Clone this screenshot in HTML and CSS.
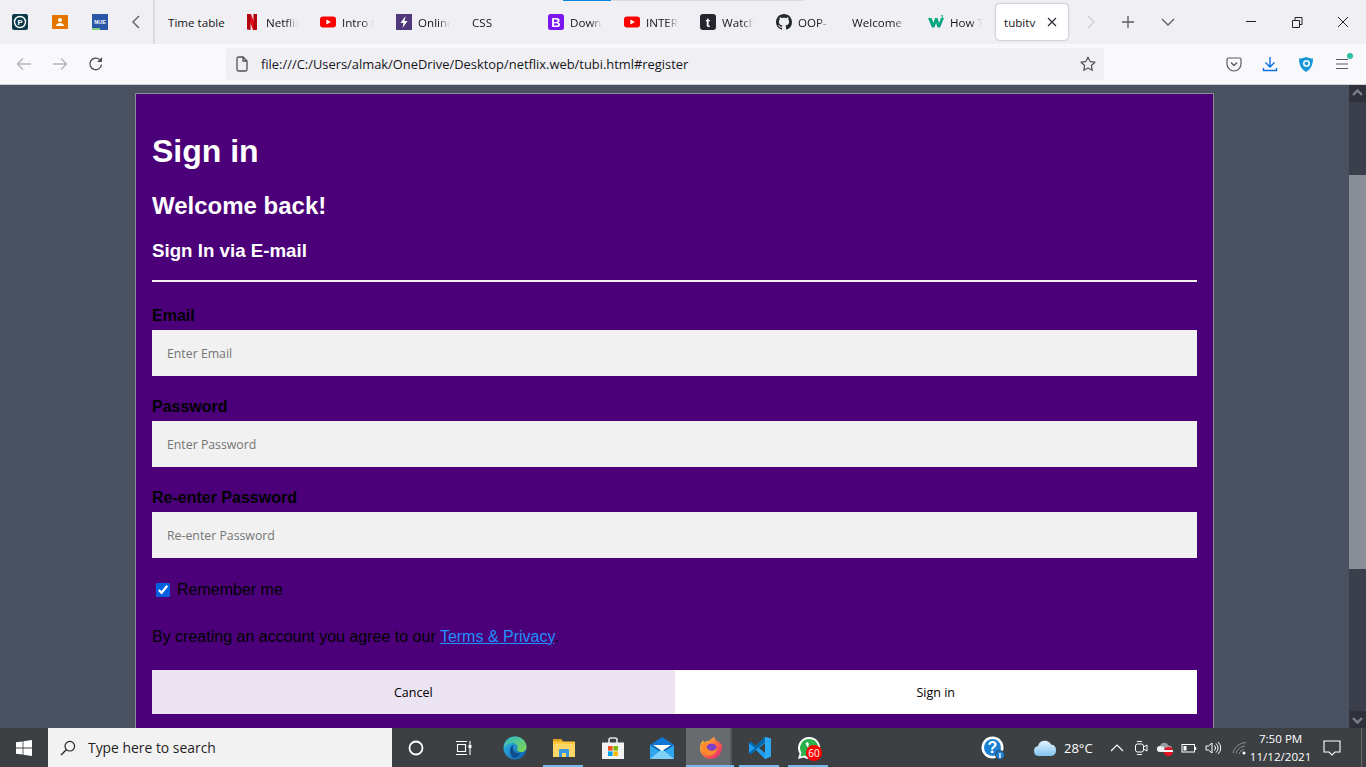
FILE: index.html
```html
<!DOCTYPE html>
<html lang="en">
<head>
  <meta charset="UTF-8">
  <title>tubitv</title>
  <link rel="stylesheet" href="styles.css">
</head>
<body>
  <!-- browser tab strip -->
  <div class="tabbar">
    <span class="tab-progress"></span>
    <svg class="ico pin" viewBox="0 0 16 16"><rect width="16" height="16" rx="2" fill="#0e3b49"/><circle cx="8" cy="8" r="5.5" fill="none" stroke="#fff" stroke-width="1.4"/><text x="8" y="10.6" class="svg-letter" font-size="7.5" fill="#fff">P</text></svg>
    <svg class="ico pin" viewBox="0 0 16 16"><rect width="16" height="14" y="1" rx="1" fill="#e37400"/><circle cx="8" cy="6" r="2" fill="#fff"/><path d="M4 12c0-4 8-4 8 0z" fill="#fff"/></svg>
    <svg class="ico pin" viewBox="0 0 16 16"><rect width="16" height="16" fill="#2a56a8"/><rect y="14" width="8" height="2" fill="#7fcf7a"/><text x="8" y="9.5" class="svg-letter" font-size="5.5" fill="#fff">NUE</text></svg>
    <svg class="ico pin" viewBox="0 0 16 16"><path d="M11 2 5 8l6 6" fill="none" stroke="#5b5b66" stroke-width="1.4"/></svg>
    <span class="tab-sep"></span>

    <div class="tab tab-plain"><span class="tab-label">Time table</span></div>
    <div class="tab"><svg class="ico tab-ico" viewBox="0 0 16 16"><path d="M3 0h4l6 16H9z" fill="#e50914"/><path d="M3 0h3.6v16L3 15.600zM9.400 0H13v15.600L9.400 16z" fill="#b1060f"/></svg><span class="tab-label">Netflix</span></div>
    <div class="tab"><svg class="ico tab-ico" viewBox="0 0 16 16"><rect y="2.500" width="16" height="11" rx="3" fill="#f00"/><path d="m6.400 5.500 4.400 2.500-4.400 2.500z" fill="#fff"/></svg><span class="tab-label">Intro t</span></div>
    <div class="tab"><svg class="ico tab-ico" viewBox="0 0 16 16"><rect width="16" height="16" fill="#51387c"/><path d="M9.500 2 4.500 9h3l-1 5 5-7h-3z" fill="#fff"/></svg><span class="tab-label">Online</span></div>
    <div class="tab"><span class="tab-label">CSS</span></div>
    <div class="tab"><svg class="ico tab-ico" viewBox="0 0 16 16"><rect width="16" height="16" rx="2.500" fill="#7c14f0"/><text x="8" y="12.500" class="svg-letter" font-size="13" fill="#fff">B</text></svg><span class="tab-label">Down</span></div>
    <div class="tab"><svg class="ico tab-ico" viewBox="0 0 16 16"><rect y="2.500" width="16" height="11" rx="3" fill="#f00"/><path d="m6.400 5.500 4.400 2.500-4.400 2.500z" fill="#fff"/></svg><span class="tab-label">INTER</span></div>
    <div class="tab"><svg class="ico tab-ico" viewBox="0 0 16 16"><rect width="16" height="16" rx="3" fill="#26262e"/><text x="8" y="13" class="svg-letter" font-size="13" fill="#fff">t</text></svg><span class="tab-label">Watch</span></div>
    <div class="tab"><svg class="ico tab-ico" viewBox="0 0 16 16"><path fill="#24292f" d="M8 0C3.580 0 0 3.580 0 8c0 3.540 2.290 6.530 5.470 7.590.4.070.55-.17.55-.38 0-.19-.01-.82-.01-1.490-2.010.37-2.530-.49-2.690-.94-.09-.23-.48-.94-.82-1.130-.28-.15-.68-.52-.01-.53.63-.01 1.080.58 1.230.82.72 1.210 1.870.87 2.330.66.070-.52.28-.87.51-1.070-1.780-.2-3.640-.89-3.640-3.950 0-.87.31-1.590.82-2.150-.08-.2-.36-1.020.08-2.120 0 0 .67-.21 2.200.82.64-.18 1.320-.27 2-.27.68 0 1.360.09 2 .27 1.530-1.040 2.200-.82 2.200-.82.44 1.100.16 1.920.08 2.120.51.56.82 1.270.82 2.150 0 3.070-1.870 3.750-3.650 3.950.29.25.54.73.54 1.480 0 1.070-.01 1.930-.01 2.200 0 .21.15.46.55.38A8.013 8.013 0 0 0 16 8c0-4.420-3.580-8-8-8z"/></svg><span class="tab-label">OOP-</span></div>
    <div class="tab"><span class="tab-label">Welcome</span></div>
    <div class="tab tab-last"><svg class="ico tab-ico" viewBox="0 0 16 16"><path d="M0 4h3.500l2 5 1.500-5h2.500l1.500 5 2-5H16l-4 9.500H9.500L8 9l-1.500 4.500H4z" fill="#00a67d"/><text x="14" y="4.500" class="svg-letter" font-size="5" fill="#00a67d">3</text></svg><span class="tab-label">How T</span></div>
    <div class="tab-active">
      <span>tubitv</span>
      <svg class="ico" viewBox="0 0 16 16"><path d="m4 4 8 8m0-8-8 8" fill="none" stroke="#2b2a33" stroke-width="1.200"/></svg>
    </div>

    <svg class="ico ctl-scroll" viewBox="0 0 16 16"><path d="m5 2 6 6-6 6" fill="none" stroke="#cfcfd8" stroke-width="1.400"/></svg>
    <svg class="ico ctl-new" viewBox="0 0 16 16"><path d="M8 2v12M2 8h12" fill="none" stroke="#5b5b66" stroke-width="1.300"/></svg>
    <svg class="ico ctl-list" viewBox="0 0 16 16"><path d="m2 5 6 6 6-6" fill="none" stroke="#5b5b66" stroke-width="1.300"/></svg>
    <svg class="ico ctl-min" viewBox="0 0 16 16"><path d="M3 7.500h10" fill="none" stroke="#222" stroke-width="1"/></svg>
    <svg class="ico ctl-win" viewBox="0 0 16 16"><path d="M3.500 6.500h7v7h-7zM6 6.500v-3h7v7h-2.500" fill="none" stroke="#222" stroke-width="1"/></svg>
    <svg class="ico ctl-win" viewBox="0 0 16 16"><path d="m3 3 10 10m0-10L3 13" fill="none" stroke="#222" stroke-width="1"/></svg>
  </div>

  <!-- browser toolbar -->
  <div class="toolbar">
    <div class="tool-btn"><svg class="ico" viewBox="0 0 16 16"><path d="M15 8H2m5-5.500L1.500 8 7 13.500" fill="none" stroke="#b4b4bb" stroke-width="1.300"/></svg></div>
    <div class="tool-btn"><svg class="ico" viewBox="0 0 16 16"><path d="M1 8h13M9 2.500 14.500 8 9 13.500" fill="none" stroke="#b4b4bb" stroke-width="1.300"/></svg></div>
    <div class="tool-btn"><svg class="ico" viewBox="0 0 16 16"><path d="M13.500 8.500A5.800 5.800 0 1 1 11.500 3.500" fill="none" stroke="#4f4f58" stroke-width="1.400"/><path d="M14 1v5H9z" fill="#4f4f58"/></svg></div>
    <div class="address">
      <svg class="ico addr-file" viewBox="0 0 16 16"><path d="M3 2.500A1.500 1.500 0 0 1 4.500 1H9l4 4v8.500A1.500 1.500 0 0 1 11.500 15h-7A1.500 1.500 0 0 1 3 13.500zM9 1v4h4" fill="none" stroke="#4f4f58" stroke-width="1.300"/></svg>
      <span class="addr-text">file:///C:/Users/almak/OneDrive/Desktop/netflix.web/tubi.html#register</span>
      <svg class="ico addr-star" viewBox="0 0 16 16"><path d="m8 1.200 2.100 4.400 4.800.6-3.500 3.300.9 4.800L8 12l-4.300 2.300.9-4.800L1.100 6.200l4.800-.6z" fill="none" stroke="#4f4f58" stroke-width="1.200" stroke-linejoin="round"/></svg>
    </div>
    <div class="tool-right">
      <div class="tool-btn"><svg class="ico" viewBox="0 0 16 16"><path d="M2.500 2h11A1.500 1.500 0 0 1 15 3.500V8a7 7 0 0 1-14 0V3.500A1.500 1.500 0 0 1 2.500 2z" fill="none" stroke="#5b5b66" stroke-width="1.200"/><path d="m5 6.500 3 3 3-3" fill="none" stroke="#5b5b66" stroke-width="1.400"/></svg></div>
      <div class="tool-btn"><svg class="ico" viewBox="0 0 16 16"><path d="M8 1v9.500M3.500 6.500 8 11l4.500-4.500M1.500 12v2.500h13V12" fill="none" stroke="#0a6fe0" stroke-width="1.400"/></svg></div>
      <div class="tool-btn"><svg class="ico" viewBox="0 0 16 16"><path d="M1 2.500c3 0 5-.7 7-1.500 2 .8 4 1.500 7 1.500C15 8.500 13 13 8 16 3 13 1 8.500 1 2.500z" fill="#1597d5"/><circle cx="8.500" cy="7.500" r="3.600" fill="#dff3fb"/><circle cx="8.500" cy="7.500" r="1.800" fill="#1597d5"/></svg></div>
      <div class="tool-btn tool-menu">
        <svg class="ico" viewBox="0 0 16 16"><path d="M2 3.500h12M2 8h12M2 12.500h12" fill="none" stroke="#5b5b66" stroke-width="1.200"/></svg>
        <span class="menu-dot"></span>
      </div>
    </div>
  </div>

  <!-- page area -->
  <div class="viewport">
    <div class="page">
      <form class="modal-box">
        <h1>Sign in</h1>
        <h2>Welcome back!</h2>
        <h3>Sign In via E-mail</h3>
        <hr>
        <label for="email">Email</label>
        <input type="text" id="email" placeholder="Enter Email">
        <label for="psw">Password</label>
        <input type="password" id="psw" placeholder="Enter Password">
        <label for="psw2">Re-enter Password</label>
        <input type="password" id="psw2" placeholder="Re-enter Password">
        <div class="remember">
          <input type="checkbox" id="remember" checked>
          <span>Remember me</span>
        </div>
        <p class="terms">By creating an account you agree to our <a href="#">Terms &amp; Privacy</a>.</p>
        <div class="form-btns">
          <button type="button" class="cancel-btn">Cancel</button>
          <button type="submit" class="signin-btn">Sign in</button>
        </div>
      </form>
    </div>
    <div class="scrollbar">
      <div class="scroll-arrow"><svg viewBox="0 0 17 17"><path d="m4 10 4.500-4.500L13 10" fill="none" stroke="#7d8089" stroke-width="2.400"/></svg></div>
      <div class="scroll-track"><div class="scroll-thumb"></div></div>
      <div class="scroll-arrow"><svg viewBox="0 0 17 17"><path d="m4 7 4.500 4.500L13 7" fill="none" stroke="#7d8089" stroke-width="2.400"/></svg></div>
    </div>
  </div>

  <!-- windows taskbar -->
  <div class="taskbar">
    <div class="start"><svg class="ico" viewBox="0 0 16 16"><path d="M0 2.300 6.600 1.400v6.100H0zM7.400 1.300 16 0v7.500H7.400zM0 8.400h6.600v6.200L0 13.700zM7.400 8.400H16V16l-8.600-1.200z" fill="#fff"/></svg></div>
    <div class="search">
      <svg class="ico search-ico" viewBox="0 0 16 16"><circle cx="9.800" cy="6.200" r="4.800" fill="none" stroke="#222" stroke-width="1.200"/><path d="M6.300 9.700 1 15" fill="none" stroke="#222" stroke-width="1.300"/></svg>
      <span>Type here to search</span>
    </div>
    <div class="task-item task-first"><svg class="ico" viewBox="0 0 16 16"><circle cx="8" cy="8" r="6.500" fill="none" stroke="#fff" stroke-width="1.800"/></svg></div>
    <div class="task-item task-view"><svg class="ico" viewBox="0 0 18 16"><path d="M1 1.500h11M1 14.500h11M2.500 4.500h8v7h-8zM15 1v14" fill="none" stroke="#fff" stroke-width="1.100"/><rect x="13.500" y="5" width="3" height="3" fill="#fff"/></svg></div>
    <div class="task-item"><svg class="ico-lg" viewBox="0 0 24 24"><defs><linearGradient id="edge1" x1="0" y1="0" x2="1" y2="1"><stop offset="0" stop-color="#35c1f1"/><stop offset="1" stop-color="#0c59a4"/></linearGradient><linearGradient id="edge2" x1="0" y1="0" x2="1" y2="1"><stop offset="0" stop-color="#2bb8c9"/><stop offset="1" stop-color="#86d84a"/></linearGradient></defs><circle cx="12" cy="12" r="11.500" fill="url(#edge1)"/><path d="M12 .5C18 .5 23.500 5 23.500 11c0 3-2.500 5-5.500 5-2.500 0-4-1-4-2.500 2-3-1-6.500-5-6.500-3 0-6 2-8 5C1.500 5 6 .5 12 .5z" fill="url(#edge2)"/><path d="M7 14c0-3 2-5 4-5-1 1-1.500 2-1 4 .7 3 4 5 8 4-2 3-4.500 5-7 5-3.500-1-4-5-4-8z" fill="#0f4f91"/></svg></div>
    <div class="task-item task-open"><svg class="ico-lg" viewBox="0 0 24 24"><path d="M1 3h8l2 2.500h12V21H1z" fill="#ffc83d"/><path d="M1 3h8l2 2.500H1z" fill="#e0a020"/><path d="M1 8h22v13H1z" fill="#ffd766"/><path d="M7 21v-8h10v8h-3v-4h-4v4z" fill="#3a96dd"/></svg></div>
    <div class="task-item"><svg class="ico-lg" viewBox="0 0 24 24"><path d="M8 7V4a2 2 0 0 1 2-2h4a2 2 0 0 1 2 2v3" fill="none" stroke="#e4e4e4" stroke-width="1.600"/><path d="M1 6.500h22V23H1z" fill="#f3f3f3"/><path d="M7 10h4.600v4.600H7z" fill="#f25022"/><path d="M12.400 10H17v4.600h-4.600z" fill="#7fba00"/><path d="M7 15.400h4.600V20H7z" fill="#00a4ef"/><path d="M12.400 15.400H17V20h-4.600z" fill="#ffb900"/></svg></div>
    <div class="task-item"><svg class="ico-lg" viewBox="0 0 24 24"><path d="M0 9 12 1l12 8v14H0z" fill="#0f78d4"/><path d="M0 9h24v14H0z" fill="#2ea5ef"/><path d="M0 9l12 8 12-8z" fill="#0b62b3"/><path d="M0 23 12 13l12 10z" fill="#7fd0f8"/><path d="M3 9h18l-9 6z" fill="#fff"/></svg></div>
    <div class="task-item task-active"><svg class="ico-lg" viewBox="0 0 24 24"><defs><linearGradient id="fox" x1="0" y1="0" x2="1" y2="1"><stop offset="0" stop-color="#ffdb3a"/><stop offset=".5" stop-color="#ff7139"/><stop offset="1" stop-color="#e31587"/></linearGradient></defs><path d="M23 9c.8 6-3.500 14-11 14C5 23 1 17.500 1 12c0-2 .5-4 1.500-5.500L4 4l1 2.500C7 5 8.500 5 9.500 5 11 3.500 14 2 15 .5c.5 2.500 2 4 4 5 1.500.8 3 2 4 3.500z" fill="url(#fox)"/><circle cx="12.500" cy="13" r="5.500" fill="#7c3fc7"/><path d="M2 9c3-3 6-3 8-1.500L8 9.500c-1 1.500 0 4 3 5 3 1 6-1 6.500-3.500 1.500 4-2 8.500-6.500 8.500S3 15.500 2 9z" fill="#ff8a2b"/></svg></div>
    <div class="task-item task-open"><svg class="ico-lg" viewBox="0 0 24 24"><path d="M17 1 8 10 3 6 1 7v10l2 1 5-4 9 9 6-2.500v-18z" fill="#1f9cf0"/><path d="M17 1 8 10 3 6 1 7l6 5-6 5 2 1 14-12z" fill="#0065a9"/><path d="M17 1v22l6-2.500v-18z" fill="#2aa7f5"/><path d="M17 7 11 12l6 5z" fill="#3c4043"/></svg></div>
    <div class="task-item task-open task-wa">
      <svg class="ico-lg" viewBox="0 0 24 24"><path d="M12 1a11 11 0 0 0-9.400 16.600L1 23l5.600-1.500A11 11 0 1 0 12 1z" fill="#fff"/><path d="M12 3a9 9 0 0 0-7.600 13.700L3.500 20.500l3.900-1A9 9 0 1 0 12 3z" fill="#29b14a"/><path d="M8.500 7c2 5 4 7 8 8.500l1.500-2-3-1.500-1 1c-1.500-.8-2.500-2-3-3l1-1.200L11 6z" fill="#fff"/></svg>
      <span class="wa-badge">60</span>
    </div>

    <div class="tray">
      <svg class="ico-lg tray-help" viewBox="0 0 24 24"><circle cx="11.500" cy="11.500" r="11" fill="#fff"/><circle cx="11.500" cy="11.500" r="8.500" fill="#1b7fd4"/><text x="11.500" y="17" class="svg-letter" font-size="16" fill="#fff">?</text><circle cx="19" cy="19" r="4.500" fill="#1b7fd4" stroke="#3c4043"/><path d="M19 17v5" stroke="#fff" stroke-width="1.400"/></svg>
      <svg class="ico-lg tray-cloud" viewBox="0 0 24 24"><defs><linearGradient id="cloud" x1="0" y1="0" x2="0" y2="1"><stop offset="0" stop-color="#e2f3fd"/><stop offset="1" stop-color="#82c4ee"/></linearGradient></defs><path d="M6 20a5 5 0 0 1-1-9.900A7 7 0 0 1 18 8.500a5.800 5.800 0 0 1 0 11.500z" fill="url(#cloud)"/></svg>
      <span class="temp">28°C</span>
      <div class="tray-item first"><svg class="ico" viewBox="0 0 16 16"><path d="m2 11 6-6 6 6" fill="none" stroke="#fff" stroke-width="1.200"/></svg></div>
      <div class="tray-item"><svg class="ico" viewBox="0 0 16 16"><rect x="2.500" y="4" width="8" height="8" rx="2" fill="none" stroke="#fff"/><path d="m10.500 7 3.500-2v6l-3.500-2M4 1.500h5M4 14.500h5" fill="none" stroke="#fff"/></svg></div>
      <div class="tray-item tray-drive"><svg class="ico" viewBox="0 0 16 16"><path d="M3 12a3 3 0 0 1 0-6 4.500 4.500 0 0 1 8.500-.5A3.500 3.500 0 0 1 15 9v3z" fill="#9a9da1"/><path d="M3 12a3 3 0 0 1 0-6l4 1v5z" fill="#f0f0f0"/></svg><span class="drive-badge"></span></div>
      <div class="tray-item"><svg class="ico" viewBox="0 0 16 16"><rect x="1" y="4.500" width="12.500" height="7.500" fill="none" stroke="#fff"/><rect x="2.500" y="6" width="3" height="4.500" fill="#fff"/><path d="M14.500 7v3" stroke="#fff" stroke-width="1.500"/></svg></div>
      <div class="tray-item"><svg class="ico" viewBox="0 0 16 16"><path d="M1 6h2.500L7 3v10L3.500 10H1zM9.500 5.500a3.500 3.500 0 0 1 0 5M11 3.500a6 6 0 0 1 0 9M13 2a8 8 0 0 1 0 12" fill="none" stroke="#fff"/></svg></div>
      <div class="tray-item tray-wifi"><svg class="ico" viewBox="0 0 16 16"><path d="M1 13C3 6 8 3 14 2.500M4 13.500C5 9.500 8.500 6.500 13 6M7 14c.5-2 2.500-4 5-4.500" fill="none" stroke="#8d9094"/><circle cx="12" cy="13" r="1.500" fill="#fff"/></svg></div>
      <div class="clock"><span>7:50 PM</span><span>11/12/2021</span></div>
      <div class="notify"><svg class="ico-notify" viewBox="0 0 18 16"><path d="M1 1h16v11h-5l-3 3-3-3H1z" fill="none" stroke="#fff" stroke-width="1.100"/></svg></div>
      <span class="show-desktop"></span>
    </div>
  </div>
</body>
</html>
```

FILE: styles.css
```css
html, body {
  margin: 0;
  height: 767px;
  overflow: hidden;
}

body {
  display: flex;
  flex-direction: column;
  font-family: 'Liberation Sans', Arial, sans-serif;
  background-color: #4a5261;
}

.ico {
  width: 16px;
  height: 16px;
  flex: none;
  display: block;
}

.ico-lg {
  width: 24px;
  height: 24px;
  flex: none;
  display: block;
}

.svg-letter {
  font-family: 'Liberation Sans', sans-serif;
  font-weight: bold;
  text-anchor: middle;
}

/* tab strip */
.tabbar {
  position: relative;
  height: 44px;
  flex: none;
  display: flex;
  align-items: center;
  padding-left: 12px;
  background-color: #f0f0f4;
  font-family: 'Open Sans', sans-serif;
  font-size: 11.6px;
  color: #15141a;
}

.tab-progress {
  position: absolute;
  left: 563px;
  top: 0;
  width: 241px;
  height: 1px;
  background: linear-gradient(to right, #0a84e0 48px, #dcdce0 48px);
}

.pin {
  margin-right: 24px;
}

.pin:nth-of-type(4) {
  margin-right: 9px;
  margin-left: -4px;
}

.tab-sep {
  width: 2px;
  height: 44px;
  background-color: #dcdce1;
  margin-right: 13px;
}

.tab {
  width: 54px;
  flex: none;
  margin-right: 22px;
  display: flex;
  align-items: center;
  gap: 6px;
  white-space: nowrap;
  overflow: hidden;
  mask-image: linear-gradient(to left, transparent 0, #000 12px);
}

.tab-plain {
  width: 60px;
  margin-right: 16px;
  mask-image: none;
}

.tab-last {
  margin-right: 14px;
}

.tab-label {
  flex: none;
}

.tab-active {
  width: 72px;
  height: 36px;
  box-sizing: border-box;
  padding: 0 8px;
  flex: none;
  display: flex;
  align-items: center;
  justify-content: space-between;
  background-color: #fff;
  border-radius: 4px;
  box-shadow: 0 0 2px rgba(0, 0, 0, 0.45);
}

.ctl-scroll { margin-left: 15px; }
.ctl-new { margin-left: 21px; }
.ctl-list { margin-left: 24px; }
.ctl-min { margin-left: 67px; }
.ctl-win { margin-left: 30px; }

/* toolbar */
.toolbar {
  height: 40px;
  flex: none;
  display: flex;
  align-items: center;
  padding-left: 6px;
  background-color: #f9f9fb;
  border-bottom: 1px solid #cfcfd8;
}

.tool-btn {
  position: relative;
  width: 36px;
  height: 32px;
  display: flex;
  align-items: center;
  justify-content: center;
}

.address {
  width: 878px;
  height: 32px;
  box-sizing: border-box;
  margin-left: 112px;
  padding: 0 8px;
  display: flex;
  align-items: center;
  background-color: #f0f0f4;
  border-radius: 4px;
  font-family: 'Open Sans', sans-serif;
  font-size: 12.9px;
  color: #15141a;
}

.addr-text {
  margin-left: 11px;
}

.addr-star {
  margin-left: auto;
}

.tool-right {
  display: flex;
  margin-left: 112px;
}

.menu-dot {
  position: absolute;
  right: 7px;
  top: 5px;
  width: 6px;
  height: 6px;
  border-radius: 50%;
  background-color: #2ac3a2;
}

/* page area */
.viewport {
  flex: 1;
  min-height: 0;
  display: flex;
  overflow: hidden;
}

.page {
  flex: 1;
  min-width: 0;
  padding: 8px 0 0 135px;
}

.modal-box {
  width: 1079px;
  box-sizing: border-box;
  padding: 18px 16px 16px;
  background-color: #4b0079;
  border: 1px solid #8b8d96;
  color: #000;
}

.modal-box h1,
.modal-box h2,
.modal-box h3 {
  color: #fff;
}

.modal-box h1 {
  font-size: 32px;
  margin: 21px 0 22px;
}

.modal-box h2 {
  font-size: 24px;
  margin: 20px 0;
}

.modal-box h3 {
  font-size: 18.72px;
  margin: 19px 0 18px;
}

.modal-box hr {
  height: 0;
  border: 1px solid #f1f1f1;
  margin: 18px 0 25px;
}

.modal-box label {
  display: block;
  font-weight: bold;
  font-size: 16px;
}

.modal-box input[type=text],
.modal-box input[type=password] {
  display: block;
  width: 100%;
  height: 46px;
  box-sizing: border-box;
  padding: 15px;
  margin: 5px 0 22px;
  border: none;
  background-color: #f1f1f1;
  font-family: 'Open Sans', sans-serif;
  font-size: 12.3px;
}

.remember {
  display: flex;
  align-items: center;
  gap: 7px;
  padding: 1px 0 0 4px;
  font-size: 16px;
}

.remember input {
  width: 14px;
  height: 14px;
  margin: 0;
  accent-color: #0060df;
}

.terms {
  margin: 29px 0 24px;
  font-size: 16px;
}

.terms a {
  color: #1e90ff;
}

.form-btns {
  display: flex;
}

.form-btns button {
  width: 50%;
  height: 44px;
  border: none;
  color: #000;
  font-family: 'Open Sans', sans-serif;
  font-size: 12.5px;
}

.cancel-btn {
  background-color: #ece3f3;
}

.signin-btn {
  background-color: #fff;
}

/* page scrollbar */
.scrollbar {
  width: 17px;
  flex: none;
  display: flex;
  flex-direction: column;
  background-color: #3b3f4b;
}

.scroll-arrow {
  height: 17px;
  flex: none;
  background-color: #2f323b;
}

.scroll-arrow svg {
  display: block;
}

.scroll-track {
  flex: 1;
  padding-top: 73px;
}

.scroll-thumb {
  height: 394px;
  background-color: #8a8e97;
}

/* taskbar */
.taskbar {
  height: 39px;
  flex: none;
  display: flex;
  align-items: center;
  background-color: #3c4043;
  color: #fff;
  font-family: 'Open Sans', sans-serif;
}

.start {
  width: 48px;
  flex: none;
  display: flex;
  justify-content: center;
}

.search {
  width: 344px;
  height: 39px;
  flex: none;
  box-sizing: border-box;
  padding-left: 12px;
  display: flex;
  align-items: center;
  gap: 12px;
  background-color: #f2f2f2;
  color: #1f1f1f;
  font-size: 13.9px;
}

.task-item {
  position: relative;
  width: 49px;
  height: 39px;
  flex: none;
  box-sizing: border-box;
  display: flex;
  align-items: center;
  justify-content: center;
}

.task-first {
  width: 48px;
}

.task-view {
  width: 48px;
  margin-right: 2px;
}

.task-view .ico {
  width: 18px;
}

.task-open::after,
.task-active::after {
  content: "";
  position: absolute;
  left: 4px;
  right: 5px;
  bottom: 0;
  height: 2px;
  background-color: #76b9ed;
}

.task-active {
  background: linear-gradient(to right, #676b6e 44px, #55595c 44px, #55595c 46px, #3c4043 46px);
}

.task-active::after {
  left: 0;
  right: 1px;
}

.wa-badge {
  position: absolute;
  left: 22px;
  top: 17px;
  width: 16px;
  height: 16px;
  border-radius: 50%;
  background-color: #f00;
  color: #fff;
  font-size: 10px;
  line-height: 16px;
  text-align: center;
}

.tray {
  flex: 1;
  display: flex;
  align-items: center;
  height: 39px;
  padding-left: 148px;
  font-size: 11.6px;
}

.tray-cloud {
  margin-left: 28px;
}

.temp {
  margin-left: 7px;
  font-size: 13px;
}

.tray-item {
  position: relative;
  width: 24px;
  height: 39px;
  flex: none;
  display: flex;
  align-items: center;
  justify-content: center;
}

.tray-item.first {
  margin-left: 12px;
}

.tray-wifi {
  margin-left: 3px;
}

.drive-badge {
  position: absolute;
  right: 4px;
  top: 19px;
  width: 9px;
  height: 9px;
  border-radius: 50%;
  background: linear-gradient(#e81123 3px, #fff 3px, #fff 5px, #e81123 5px);
}

.clock {
  width: 62px;
  margin-left: -2px;
  display: flex;
  flex-direction: column;
  align-items: center;
  gap: 3px;
  line-height: 15px;
}

.notify {
  width: 40px;
  display: flex;
  justify-content: center;
}

.ico-notify {
  width: 18px;
  height: 16px;
  display: block;
}

.show-desktop {
  width: 1px;
  height: 39px;
  margin-left: 9px;
  background-color: #6b6f72;
}
```
